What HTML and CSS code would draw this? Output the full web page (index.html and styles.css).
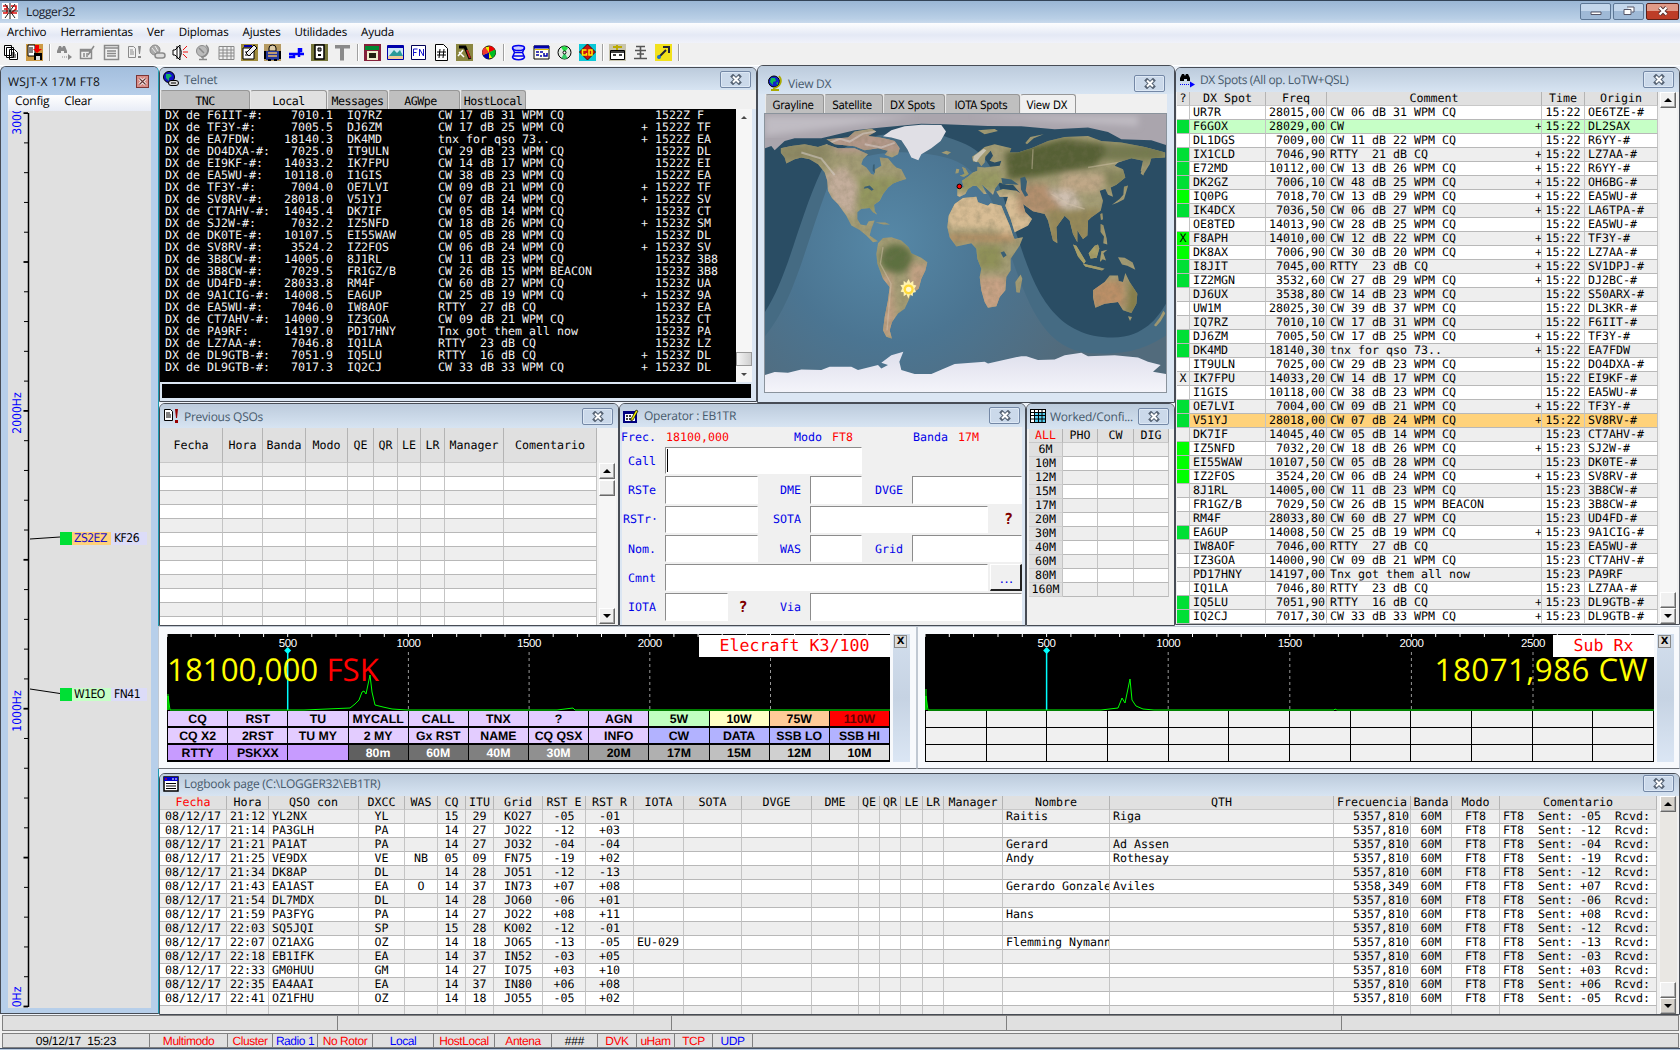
FILE: index.html
```html
<!DOCTYPE html>
<html lang="es">
<head>
<meta charset="utf-8">
<title>Logger32</title>
<link rel="stylesheet" href="styles.css">
</head>
<body>
<div class="app">
  <header class="titlebar">
    <svg class="ico" viewBox="0 0 16 16"><rect width="16" height="16" fill="#fff"/><path d="M1 3h4v3h-3h3v4h-4M9 3h5v3l-5 4h6" stroke="#d11" stroke-width="1.6" fill="none"/><path d="M8 0v16M0 8h16M3 1l10 14M13 1l-10 14" stroke="#222" fill="none"/></svg>
    <span class="app-name">Logger32</span>
    <span class="sysbuttons">
      <i><svg viewBox="0 0 12 10"><path d="M1 6h10v2.500h-10z" fill="#fff" stroke="#556"/></svg></i>
      <i><svg viewBox="0 0 12 10"><path d="M4 1h7v5h-2M1 3.500h7v5h-7z" fill="#fff" stroke="#556"/></svg></i>
      <i class="shut"><svg viewBox="0 0 12 10"><path d="M2.500 1.500l7 7M9.500 1.500l-7 7" stroke="#533" stroke-width="4"/><path d="M2.500 1.500l7 7M9.500 1.500l-7 7" stroke="#fff" stroke-width="2.200"/></svg></i>
    </span>
  </header>
  <nav class="menubar"><span>Archivo</span><span>Herramientas</span><span>Ver</span><span>Diplomas</span><span>Ajustes</span><span>Utilidades</span><span>Ayuda</span></nav>
  <div class="toolbar" id="toolbar"></div>

  <main class="mdi">
    <section class="win active w-wsjt">
      <div class="cap"><b>WSJT-X 17M FT8</b><i class="redx"><svg viewBox="0 0 9 9"><path d="M2 2l5 5M7 2l-5 5" stroke="#fff" stroke-width="2.400"/><path d="M2 2l5 5M7 2l-5 5" stroke="#633"/></svg></i></div>
      <div class="submenu"><span>Config</span><span>Clear</span></div>
      <div class="bandmap">
        <svg id="scale" viewBox="8 110 143 897"></svg>
        <div class="tag t1"><i></i><b class="am">ZS2EZ</b><em>KF26</em></div>
        <div class="tag t2"><i></i><b class="gr">W1EO</b><em>FN41</em></div>
      </div>
    </section>

    <section class="win w-telnet">
      <div class="cap"><svg class="ico" viewBox="0 0 16 16"><circle cx="6" cy="6" r="5.500" fill="#11c" stroke="#000"/><path d="M3 3h4l2 2-3 2v3l-3-3z" fill="#1a6"/><rect x="5.500" y="9.500" width="10" height="5" rx="2.500" fill="#ddd" stroke="#000"/><path d="M8 12h5" stroke="#000"/></svg><b>Telnet</b></div>
      <div class="tabs mono"><span>TNC</span><span class="on">Local</span><span>Messages</span><span>AGWpe</span><span>HostLocal</span></div>
      <div class="term"><pre id="telnet"></pre><div class="sb flat"><i class="up"></i><i class="thumb"></i><i class="down"></i></div></div>
      <div class="entry"></div>
    </section>

    <section class="win w-map">
      <div class="cap"><svg class="ico" viewBox="0 0 16 16"><circle cx="7" cy="6.500" r="5.500" fill="#12c" stroke="#000"/><path d="M4 3l4 0 1 3-3 1v3l-3-3zM9 8l2-1v3z" fill="#1b5"/><path d="M12 1c4 5 1 11-5 12M4 15h8M7 13v2" stroke="#aa0" stroke-width="1.800" fill="none"/></svg><b>View DX</b></div>
      <div class="tabs tah"><span>Grayline</span><span>Satellite</span><span>DX Spots</span><span>IOTA Spots</span><span class="on">View DX</span></div>
      <svg class="map" viewBox="31 159 1203 837" preserveAspectRatio="none">
        <defs>
          <radialGradient id="sea" gradientUnits="userSpaceOnUse" cx="400" cy="540" r="620"><stop offset="0" stop-color="#5688a7"/><stop offset=".5" stop-color="#4b7592"/><stop offset="1" stop-color="#526b7c"/></radialGradient>
          <linearGradient id="ant" x1="0" x2="0" y1="0" y2="1"><stop offset="0" stop-color="#dedfec"/><stop offset="1" stop-color="#f4f4fa"/></linearGradient>
          <filter id="soft"><feGaussianBlur stdDeviation="10"/></filter>
          <filter id="relief" x="0" y="0" width="100%" height="100%"><feTurbulence type="fractalNoise" baseFrequency=".05" numOctaves="4" seed="4"/><feColorMatrix values="0 0 0 0 .2  0 0 0 0 .18  0 0 0 0 .1  1.600 0 0 0 -.600"/></filter>
          <clipPath id="land">
            <path d="M78 262L110 255 150 250 190 258 215 250 250 262 300 262 340 280 325 295 320 310 335 320 350 340 358 342 362 325 380 315 375 290 400 292 415 310 425 320 440 325 450 345 455 355 430 362 415 368 400 380 385 400 375 420 358 432 360 450 368 462 355 455 345 442 320 444 308 455 308 475 318 492 335 495 342 482 360 480 350 505 345 525 370 542 355 545 335 525 315 508 290 495 275 465 250 430 232 412 220 390 218 360 210 335 190 310 165 295 140 290 120 295 95 308 90 290 78 275Z"/>
            <path d="M215 235L280 230 300 212 350 203 365 212 340 225 375 230 400 235 420 240 435 262 430 280 412 290 390 282 400 270 370 262 330 268 300 256 240 250Z"/>
            <path d="M370 548L385 532 410 530 440 540 462 560 470 578 500 592 518 605 512 630 500 655 492 685 470 700 462 720 450 745 430 760 412 785 405 810 412 836 395 830 385 810 390 770 400 720 405 680 385 655 368 610 365 580Z"/>
            <path d="M600 430L625 412 665 408 670 425 700 435 708 428 740 435 750 460 765 495 775 525 780 535 805 530 795 555 768 595 768 630 755 650 752 690 735 710 725 738 700 742 690 725 680 690 675 650 680 625 668 595 665 565 650 548 605 558 585 530 578 500 582 465Z"/>
            <path d="M785 696L782 665 798 642 803 655 795 697Z"/>
            <path d="M608 405L608 380 628 380 622 360 640 348 655 335 668 330 668 318 690 320 735 315 740 300 720 305 705 300 715 285 708 270 692 288 690 305 680 316 672 304 655 302 652 288 670 275 690 258 720 250 770 262 765 275 790 275 830 262 880 240 930 228 1000 225 1040 240 1100 245 1170 258 1232 275 1232 290 1190 292 1185 310 1168 338 1158 330 1165 300 1130 292 1090 305 1080 315 1105 325 1112 350 1085 372 1068 380 1075 408 1060 402 1052 385 1035 390 1045 420 1038 450 1010 470 1000 480 998 525 985 535 975 520 968 508 968 545 976 560 955 520 945 480 930 465 905 500 908 548 895 540 880 480 870 460 835 452 805 430 812 455 832 475 820 495 780 515 768 475 752 435 760 408 735 408 725 392 745 385 785 390 798 398 775 372 755 372 735 365 722 382 715 402 700 388 680 370 696 400 688 400 666 376 655 375 640 385 632 400 615 408Z"/>
            <path d="M615 345L630 340 622 318 632 322 642 340 628 348ZM602 338l3-14 9 1-3 12ZM560 276l15-6 14 4-10 8ZM670 208l50-4 10 6-40 10ZM812 246l15-18 40-8-30 12-20 18Z"/>
            <path d="M955 552l10 4 28 46-5 8-18-22ZM985 610l45 10 20 5-8 5-50-12ZM1002 578l18-22 10-4 4 12-8 28-18 2ZM1040 572l18-4-12 10 8 22-10-4-8 8ZM1090 590l20 2 24 14 8 22-24-12-16-4ZM1038 490l8 4 10 40 2 18-12-4 2-20-10-14ZM1037 460l6-2 2 18-6 2ZM1072 432l22-16 12-14 2-24 12-4-6 22-6 20-20 10Z"/>
            <path d="M1015 690L1050 665 1065 645 1090 645 1092 662 1105 665 1112 638 1125 665 1148 700 1145 730 1130 758 1105 750 1090 725 1050 730 1022 742 1015 710ZM1120 768l12 2-6 12ZM1198 795l18-24 10-20 6 8-14 24-14 16ZM1158 338l14-40 20-14-16 30-10 30Z"/>
            <path d="M362 486l30 0 14 6-20 0Z"/>
          </clipPath>
        </defs>
        <rect x="31" y="159" width="1203" height="837" fill="#2a4d64"/>
        <path fill="#456b83" d="M31 755C100 650 130 480 200 330C260 210 500 195 580 230C690 265 710 300 760 450C820 600 850 832 1075 832C1170 830 1210 770 1234 730V996H31Z"/>
        <path fill="url(#sea)" d="M31 828C120 720 150 560 218 380C270 240 520 270 590 295C690 330 730 450 770 590C830 760 880 880 1030 880C1140 885 1195 850 1234 826V996H31Z"/>
        <path fill="#aaa5ad" d="M31 159H1234V252L1190 238 1100 235 1060 213 1000 200 900 205 800 196 700 195 570 190 500 188 380 200 300 208 200 232 120 232 90 240 60 268 50 255 31 262Z"/>
        <g filter="url(#soft)"><path fill="#c0bcc3" d="M31 165h450l-200 30-250 30zM650 165h500v30z"/></g>
        <g clip-path="url(#land)">
          <rect x="31" y="159" width="1203" height="837" fill="#a39c75"/>
          <g filter="url(#soft)">
            <path fill="#c4ae9c" d="M205 345l65-30 40 60-15 95-60-40z"/><path fill="#93975f" d="M310 350h130v100h-130z"/><path fill="#b3988a" d="M210 215h240v60h-200z"/><path fill="#8c8863" d="M75 250h150v50h-150z"/>
            <ellipse cx="425" cy="595" rx="48" ry="44" fill="#5d6f40"/><path fill="#c2a184" d="M470 610h60l-20 80-50 20zM370 650l40-10 20 190h-50z"/>
            <path fill="#d8bd95" d="M570 400h200l70 60-20 60-70 10-20-25h-150z"/><path fill="#b58d63" d="M580 522h200v20h-200z"/><path fill="#8f9159" d="M660 555h80v70h-70z"/><path fill="#c9a386" d="M670 650h90v100h-90z"/>
            <path fill="#566136" d="M750 275l180-42 150 20-60 65-180 30-80 10z"/><path fill="#747a50" d="M1050 250h180v50h-180z"/><path fill="#989a64" d="M610 330h130v60h-130z"/><path fill="#b28f6e" d="M790 370h80l80 50-40 40h-120z"/><path fill="#c0a888" d="M930 340h130l-30 55h-130z"/><path fill="#cfc0b1" d="M875 385l80 5 30 50-60 5z"/><path fill="#96895a" d="M880 445h160v100h-160z"/><path fill="#85855a" d="M1040 330h80v50h-60z"/>
            <path fill="#bc9067" d="M1010 660h100v80h-100z"/><path fill="#857d4a" d="M1125 660h30v100h-40z"/><path fill="#a9a068" d="M950 550h90v80h-90z"/>
          </g>
          <rect x="31" y="159" width="1203" height="837" filter="url(#relief)" opacity=".38"/>
          <path d="M385 560l-8 50 32 60-12 140M890 400l50 30 50 15M835 265l-3 60M1000 320l120-20" fill="none" stroke="#d5c6ae" stroke-width="4" opacity=".45"/>
          <path d="M215 250l40-16 30 8 40-24 40-6M330 250l50 10 40-14M140 275l60 18 40 50" fill="none" stroke="#d9d2cf" stroke-width="6" opacity=".5"/>
        </g>
        <path fill="#3a5f74" d="M330 378l15-4 12 12-6 4-12-8-12 2ZM797 352l14-4 6 14-4 28 8 14-10 4-12-22ZM740 352l30 4 22 16-30-2-18 2ZM738 576l10-4 8 12-10 8ZM355 312l5-2 0 28-6-10Z"/>
        <path fill="#e0dfe5" d="M385 226L410 208 450 196 500 191 560 192 574 212 558 240 530 262 500 280 491 298 470 290 458 265 440 238 410 230Z"/>
        <path fill="#d8d4cf" d="M655 298l2-12 30-22 8 4-20 22-10 14z" opacity=".7"/>
        <path fill="url(#ant)" d="M31 945L60 936 100 938 140 928 200 930 225 920 290 920 310 930 370 915 380 925 400 915 380 908 410 885 446 875 434 905 440 930 480 942 530 942 600 912 690 905 700 910 800 888 815 888 850 900 900 898 930 885 980 878 1000 888 1080 885 1150 892 1180 905 1218 915 1195 935 1234 942V996H31Z"/>
        <path d="M462 656l5 12 9-7 0 12 9 2-6 10 5 10-9 2-1 11-8-6-5 13-5-13-9 6 0-12-9-2 5-10-6-10 10-1 0-12 8 7z" fill="#fff3b0"/><circle cx="462" cy="687" r="15" fill="#ffd93a"/><circle cx="462" cy="687" r="8" fill="#fff8d0"/>
        <circle cx="614" cy="377" r="7" fill="#f00" stroke="#000" stroke-width="3"/>
      </svg>
    </section>

    <section class="win w-spots">
      <div class="cap"><svg class="ico" viewBox="0 0 16 16"><path d="M1 6l2-4h2l1 2 1-2h2l2 4v3h-3v-2h-3v2h-4z" fill="#000"/><path d="M1 12.500h10" stroke="#00f" stroke-dasharray="1 1"/><path d="M11 9.500l5 3-5 3z" fill="#00f"/></svg><b>DX Spots (All op. LoTW+QSL)</b></div>
      <div class="gridrow"><table id="spots"></table><div class="sb"><i class="up"></i><i class="thumb"></i><i class="down"></i></div></div>
    </section>

    <section class="win w-prev">
      <div class="cap"><svg class="ico" viewBox="0 0 16 16"><path d="M1.500 1.500h6l2 2v9h-8z" fill="#fff" stroke="#000"/><path d="M3 5h4M3 7h5M3 9h5" stroke="#000"/><path d="M12 1h3l-1 9h-1zM12 12h3v3h-3z" fill="#900"/></svg><b>Previous QSOs</b></div>
      <div class="gridrow"><table id="prev"></table><div class="sb"><i class="up"></i><i class="thumb"></i><i class="down"></i></div></div>
    </section>

    <section class="win w-oper">
      <div class="cap"><svg class="ico" viewBox="0 0 16 16"><rect x="1" y="4" width="12" height="10" fill="#fff" stroke="#000080" stroke-width="2"/><path d="M0 3h12v3h-12z" fill="#000080"/><path d="M3 8h2M6 8h2M3 11h2M6 11h2" stroke="#000" stroke-width="1.500"/><path d="M8 11l5-9 2 1-5 9-2 1z" fill="#ee0" stroke="#000" stroke-width=".700"/></svg><b>Operator : EB1TR</b></div>
      <div class="form">
        <div class="fr head"><label>Frec.</label><u class="f1">18100,000</u><label>Modo</label><u class="f2">FT8</u><label>Banda</label><u>17M</u></div>
        <div class="fr"><label>Call</label><span class="in caret"></span></div>
        <div class="fr"><label>RSTe</label><span class="in"></span><label>DME</label><span class="in"></span><label>DVGE</label><span class="in"></span></div>
        <div class="fr sota"><label>RSTr·</label><span class="in"></span><label>SOTA</label><span class="in"></span><strong>?</strong></div>
        <div class="fr"><label>Nom.</label><span class="in"></span><label>WAS</label><span class="in"></span><label>Grid</label><span class="in"></span></div>
        <div class="fr cmnt"><label>Cmnt</label><span class="in"></span><button>...</button></div>
        <div class="fr iota"><label>IOTA</label><span class="in"></span><strong>?</strong><label>Via</label><span class="in"></span></div>
      </div>
    </section>

    <section class="win w-worked">
      <div class="cap"><svg class="ico" viewBox="0 0 16 16"><rect x=".500" y="1.500" width="15" height="13" fill="#fff" stroke="#000"/><path d="M5 5h10v9h-10z" fill="#5ce"/><path d="M1 4.500h14M1 7.500h14M1 11h14M4.500 2v12M8.500 2v12M12 2v12" stroke="#000"/></svg><b>Worked/Confi...</b></div>
      <table id="worked"></table>
    </section>

    <section class="radio r1">
      <div class="scope"><svg id="scope1"></svg><div class="vfo">18100,000 <span>FSK</span></div><div class="rig">Elecraft K3/100</div></div>
      <div class="side"><i>X</i></div>
      <div class="keys" id="keys1"></div>
    </section>
    <section class="radio r2">
      <div class="scope"><svg id="scope2"></svg><div class="vfo">18071,986 CW</div><div class="rig">Sub Rx</div></div>
      <div class="side"><i>X</i></div>
      <div class="keys" id="keys2"></div>
    </section>

    <section class="win w-log">
      <div class="cap"><svg class="ico" viewBox="0 0 16 16"><rect x="1" y="1" width="14" height="14" fill="#fff" stroke="#000" stroke-width="1.500"/><path d="M1 1h14v4h-14z" fill="#00c"/><path d="M2 3h2" stroke="#f00"/><path d="M9 3h2M12 3h2" stroke="#fff"/><path d="M3 7.500h10M3 10h10M3 12.500h10" stroke="#000"/></svg><b>Logbook page (C:\LOGGER32\EB1TR)</b></div>
      <div class="gridrow"><table id="log"></table><div class="sb"><i class="up"></i><i class="thumb"></i><i class="down"></i></div></div>
    </section>
  </main>
  <div class="status s1"><span></span><span></span><span></span><span></span><span></span></div>
  <div class="status s2"><span class="k">09/12/17&nbsp; 15:23</span><span>Multimodo</span><span>Cluster</span><span class="b">Radio 1</span><span>No Rotor</span><span class="b">Local</span><span>HostLocal</span><span>Antena</span><span class="k">###</span><span>DVK</span><span>uHam</span><span>TCP</span><span class="b">UDP</span><span></span></div>
  <div class="task"></div>
</div>
<script src="app.js"></script>
</body>
</html>
```
FILE: styles.css
```css
* { box-sizing: border-box; }
body { margin: 0; background: #f0f0f0; overflow: hidden; }
.app { width: 1680px; height: 1050px; display: flex; flex-direction: column; font: 12px "Open Sans", sans-serif; text-rendering: geometricPrecision; color: #000; }
i, em, u { font-style: normal; text-decoration: none; }
svg { display: block; }
.ico { width: 16px; height: 16px; flex: none; }

.titlebar { height: 23px; flex: none; border-top: 1px solid #334357; background: linear-gradient(#9ab6d5, #b9cfe6 80%, #c9daec); display: flex; align-items: center; padding: 0 1px 2px 2px; }
.titlebar .app-name { margin-left: 8px; font-size: 12px; letter-spacing: -.35px; color: #15202c; }
.sysbuttons { margin-left: auto; display: flex; gap: 2px; }
.sysbuttons i { width: 31px; height: 17px; border: 1px solid #5c7694; border-radius: 2px; background: linear-gradient(#c3d6eb 50%, #9fb9d6 50%); display: flex; align-items: center; justify-content: center; }
.sysbuttons svg { width: 12px; height: 10px; fill: none; }
.sysbuttons .shut { width: 33px; background: linear-gradient(#e09a88 50%, #bd3d27 50%); border-color: #5a2018; }

.menubar { height: 20px; flex: none; background: linear-gradient(#fdfdfe, #e4e9f5 60%, #f0f2fa); display: flex; align-items: center; padding: 0 7px 1px; gap: 14px; font-size: 11.600px; letter-spacing: -.15px; }
.toolbar { height: 23px; flex: none; background: #f0f0f0; border-bottom: 1px solid #fff; display: flex; align-items: center; padding: 0 0 3px 2px; }
.toolbar svg { width: 17px; height: 17px; margin: 0 3.070px; flex: none; fill: none; }
.toolbar svg:first-child { margin-left: 1px; }
.toolbar hr { width: 1px; height: 17px; margin: 0 3px; border: 0; background: #a0a0a0; box-shadow: 1px 0 #fff; flex: none; }

.mdi { position: relative; flex: 1; background: #eef3fa; }
.win { position: absolute; background: #dbe6f3; border: 1px solid #474c55; border-radius: 6px 6px 0 0; overflow: hidden; display: flex; flex-direction: column; }
.cap { flex: none; height: 23px; background: linear-gradient(#bccbdc, #d7e4f2); display: flex; align-items: center; padding: 0 5px 0 3px; }
.cap b { font-weight: 400; margin-left: 5px; color: #475a6c; letter-spacing: -.25px; white-space: nowrap; flex: 1; }
.cap .x { width: 31px; height: 17px; border: 1px solid #7488a6; border-radius: 2px; background: #cbd9ea; display: flex; align-items: center; justify-content: center; box-shadow: inset 0 0 0 1px #dde8f5; flex: none; }
.cap .x svg { width: 12px; height: 11px; }

/* scrollbars */
.sb { width: 17px; flex: none; display: flex; flex-direction: column; background: #f6f6f6; margin-left: auto; }
.sb i { width: 16px; height: 16px; flex: none; background: #f0f0f0; border: 1px solid; border-color: #fff #696969 #696969 #fff; box-shadow: inset -1px -1px #a8a8a8; }
.sb .thumb { margin-top: auto; }
.sb i.up::after, .sb i.down::after { content: ""; display: block; margin: 5px auto 0 3px; width: 0; border: 4px solid transparent; border-top: 0; border-bottom-color: #000; }
.sb i.down::after { border: 4px solid transparent; border-bottom: 0; border-top-color: #000; }

/* data grids */
table { table-layout: fixed; border-spacing: 0; font: 11.630px/13px "DejaVu Sans Mono", monospace; flex: none; width: 0; background: #fff; }
th { font-weight: 400; background: #e0e0e0; border-right: 1px solid #b4b4b4; border-bottom: 1px solid #c8c8c8; padding: 0; height: 14px; overflow: hidden; white-space: nowrap; }
td { height: 14px; padding: 0 0 0 3px; border-right: 1px solid #c4c4c4; border-bottom: 1px solid #b8b8b8; overflow: hidden; white-space: pre; }
tr.alt td { background: #eee; }
td.c { text-align: center; padding: 0; }
td.r { text-align: right; padding: 0 1px 0 0; }
.plus { margin-left: 2px; }
.gridrow { display: flex; flex: 1; min-height: 0; background: #f0f0f0; }

.w-wsjt { left: 0; top: 0; width: 159px; height: 948px; background: #b7cfea; border-right-color: #1c9bb0; }
.w-wsjt .cap { height: 28px; background: linear-gradient(#a3bedd, #b7cfea); padding: 0 9px 0 7px; }
.w-wsjt .cap b { margin: 0; color: #111; font-size: 12px; letter-spacing: .25px; }
.redx { width: 13px; height: 13px; background: #d98c86; border: 1px solid #7b3535; }
.redx svg { width: 11px; height: 11px; }
.submenu { height: 16px; margin: 0 7px; background: linear-gradient(#fff, #e8ecf6); display: flex; gap: 15px; padding: 0 0 4px 7px; align-items: center; font-size: 12px; letter-spacing: -.25px; flex: none; line-height: 12px; }
.bandmap { flex: none; height: 897px; margin: 0 7px; position: relative; background: #e0e0e0; }
.bandmap svg { width: 143px; height: 897px; overflow: hidden; font: 12px "DejaVu Sans Condensed", "DejaVu Sans", sans-serif; }
.tag { position: absolute; left: 52px; display: flex; height: 13px; font: 12px/13px "DejaVu Sans Condensed", "DejaVu Sans", sans-serif; letter-spacing: -.5px; }
.tag i { width: 12px; background: #00df35; }
.tag b { width: 39px; padding-left: 2px; font-weight: 400; }
.tag em { width: 36px; padding-left: 3px; background: #dcdcf8; }
.tag .am { background: #ffd27a; color: #1c10c8; }
.tag .gr { background: #c6ffc6; }
.t1 { top: 421px; }
.t2 { top: 577px; }

.tabs { display: flex; flex: none; height: 19px; background: #f0f0f0; }
.tabs span { background: #bfbfbf; border: 1px solid #979797; border-left-color: #e8e8e8; border-bottom: 0; border-radius: 3px 3px 0 0; display: flex; align-items: center; justify-content: center; padding-top: 2px; }
.tabs .on { background: #e0e0e0; }
.mono { font: 11.630px "DejaVu Sans Mono", monospace; letter-spacing: -.5px; }
.tah { font: 11.500px "DejaVu Sans Condensed", "DejaVu Sans", sans-serif; letter-spacing: -.3px; }

.w-telnet { left: 159px; top: 1px; width: 598px; height: 335px; }
.w-telnet .cap { height: 22px; }
.w-telnet .tabs span:nth-child(1) { width: 90px; }
.w-telnet .tabs span:nth-child(2) { width: 77px; }
.w-telnet .tabs span:nth-child(3) { width: 61px; }
.w-telnet .tabs span:nth-child(4) { width: 72px; padding-right: 7px; }
.w-telnet .tabs span:nth-child(5) { width: 66px; }
.term { display: flex; height: 273px; background: #000; margin-right: 4px; flex: none; }
.term pre { margin: 0; padding: 0 0 0 5px; width: 577px; font: 11.630px/12px "DejaVu Sans Mono", monospace; color: #f2f2f2; }
.flat { width: 16px; }
.flat i { border: 0; box-shadow: none; background: none; }
.flat .thumb { height: 14px; border: 1px solid #999; background: linear-gradient(90deg, #f4f4f4, #cfcfcf); }
.flat i.up::after, .flat i.down::after { border-width: 3px; margin-top: 7px; margin-left: 5px; opacity: .7; }
.flat i.up::after { border-top-width: 0; }
.flat i.down::after { border-bottom-width: 0; }
.entry { height: 14px; background: #000; margin: 2px 5px 0 2px; }

.w-map { left: 757px; top: -1px; width: 418px; height: 338px; }
.w-map .cap { height: 28px; padding: 6px 9px 0 9px; }
.w-map .tabs { margin: 0 7px; }
.w-map .tabs .on { background: #f0f0f0; }
.w-map .tabs span:nth-child(1), .w-map .tabs span:nth-child(2) { width: 59px; padding-right: 3px; }
.w-map .tabs span:nth-child(3) { width: 62px; padding-right: 3px; }
.w-map .tabs span:nth-child(4) { width: 75px; padding-right: 3px; }
.w-map .tabs span:nth-child(5) { width: 56px; padding-right: 2px; }
.map { width: 403px; height: 280px; margin-left: 6px; border: 1px solid #8a939c; flex: none; }

.w-spots { left: 1175px; top: 1px; width: 505px; height: 558px; }
.w-spots .cap { height: 24px; padding-bottom: 1px; }
.w-spots .cap b { letter-spacing: -.35px; }
.w-spots tr.green td { background: #c6ffc6; }
.w-spots tr.amber td { background: #ffd27a; }
.w-spots tr td.g1 { background: #00df35; }
.w-spots tr td.g2 { background: #0f0; }
.w-spots table { margin-left: 1px; }
.w-spots .sb { margin-right: 2px; }

.w-prev { left: 159px; top: 337px; width: 460px; height: 223px; }
.w-prev .cap { height: 24px; }
.w-prev th { height: 35px; }
.w-prev .sb { margin: 35px 2px 1px auto; }
.w-prev .thumb { margin-top: 1px; }
.w-prev .down { margin-top: auto; }

.w-oper { left: 619px; top: 337px; width: 407px; height: 223px; }
.form { background: #f0f0f0; margin: 0 3px 0 2px; padding-left: 1px; flex: 1; font: 11.630px "DejaVu Sans Mono", monospace; color: #0000e8; display: flex; flex-direction: column; gap: 2px; }
.fr { height: 27.300px; display: grid; grid-template-columns: 35px 93px 38px 52px 36px 1fr; column-gap: 7px; align-items: stretch; }
.fr label { text-align: right; align-self: center; white-space: nowrap; padding-right: 2px; direction: rtl; unicode-bidi: plaintext; }
.fr u { color: #f00; align-self: center; white-space: nowrap; }
.fr.head { display: flex; height: 19px; gap: 10px; margin-bottom: -1px; }
.fr.head label { padding: 0; margin-left: -2px; }
.fr .f1 { width: 120px; }
.fr .f2 { width: 73px; }
.in { background: #fff; border: 1px solid #8c8c8c; border-right-color: #fff; border-bottom-color: #fff; }
.caret { grid-column: 2 / 5; }
.caret::before { content: ""; display: block; width: 1px; height: 23px; margin: 1px; background: #000; }
.fr strong { color: #800000; font: bold 15px "DejaVu Sans Mono", monospace; align-self: center; text-align: center; }
.sota { grid-template-columns: 35px 93px 38px 178px 1fr; }
.cmnt { grid-template-columns: 35px 323px 1fr; }
.cmnt button { margin-left: -5px; background: #f0f0f0; border: 1px solid #fff; border-right: 2px solid #222; border-bottom: 2px solid #222; color: #0000e8; font: 11px "DejaVu Sans Mono", monospace; letter-spacing: -2px; padding: 5px 0 0; }
.iota { grid-template-columns: 35px 63px 16px 45px 1fr; }

.w-worked { left: 1026px; top: 337px; width: 149px; height: 223px; background: #f0f0f0; }
.w-worked .cap { height: 25px; padding-bottom: 1px; }
.w-worked .cap b { letter-spacing: -.25px; margin-left: 4px; }
.w-worked table { margin-left: 2px; }
.w-worked th:first-child { color: #f00; }
.w-worked td:first-child { background: #e0e0e0; border-bottom-color: #d0d0d0; }

.radio { position: absolute; top: 560px; height: 143px; background: #f7f9fc; border: 1px solid #c0c8d2; border-bottom-color: #6d7178; display: grid; grid-template-rows: 77px 51px; padding: 7px 7px 0 8px; column-gap: 3px; }
.r1 { left: 158px; width: 759px; grid-template-columns: 723px 17px; }
.r2 { left: 917px; width: 763px; grid-template-columns: 729px 17px; padding-left: 7px; }
.scope { background: #000; position: relative; }
.scope svg { width: 100%; height: 77px; font: 11.500px "Liberation Sans", sans-serif; letter-spacing: -.4px; }
.vfo { position: absolute; top: 21px; left: 0; font-size: 31.300px; line-height: 31px; color: #ff0; white-space: nowrap; letter-spacing: 0; }
.vfo span { color: #f00; }
.rig { position: absolute; right: 0; top: 1px; width: 191px; height: 22px; background: #fff; color: #f00; font: 16.600px/21px "DejaVu Sans Mono", monospace; text-align: center; }
.r2 .rig { width: 101px; }
.r2 .vfo { left: auto; right: 6px; letter-spacing: .45px; }
.side { grid-row: 1 / 3; grid-column: 2; background: linear-gradient(#d2deed, #c6d3e3 50%, #dbe6f4); padding: 1px; }
.side i { display: block; width: 13px; height: 13px; border: 1px solid #888; background: #dcdcdc; font: bold 10px/11px "DejaVu Sans", sans-serif; text-align: center; }
.keys { grid-column: 1; grid-row: 2; display: grid; grid-template-columns: repeat(12, 1fr); grid-template-rows: repeat(3, 17px); background: #f0f0f0; border-left: 1px solid #000; }
.keys span { border-right: 1px solid #000; border-bottom: 2px solid #000; font: bold 12.300px/17px "Liberation Sans", sans-serif; text-align: center; white-space: nowrap; overflow: hidden; }
.r2 .keys span { border-bottom-width: 1px; }
.lil { background: #e3ccff; } .pur { background: #c79bff; } .lav { background: #b2b2ff; }

.w-log { left: 159px; top: 707px; width: 1521px; height: 242px; }
.w-log .cap { height: 22px; padding-bottom: 3px; }
.w-log .cap b { letter-spacing: -.25px; }
.w-log th:first-child { color: #f00; }
.w-log .sb { margin-right: 2px; background: #e9e7e3; }
.w-log .sb .up, .w-log .sb .down { background: #d6d2cb; }

.status { flex: none; display: flex; background: #e0e0e0; border: 1px solid #808080; margin: 0 1px 0 2px; }
.status span { border-right: 1px solid #808080; text-align: center; white-space: nowrap; }
.s1 { height: 16px; margin-bottom: 2px; }
.s1 span { width: 334.700px; }
.s1 span:last-child, .s2 span:last-child { flex: 1; border: 0; }
.s2 { height: 15px; font: 12px/15px "Liberation Sans", sans-serif; letter-spacing: -.45px; color: #f00; }
.s2 .k { color: #000; letter-spacing: -.2px; } .s2 .b { color: #00f; }
.task { height: 2px; flex: none; background: #b9cbe0; border-top: 1px solid #44536a; }
```
FILE: app.js
```js
const $ = id => document.getElementById(id);

// Close button on every document window except the docked band map
document.querySelectorAll('.win:not(.active) .cap').forEach(c => {
  c.insertAdjacentHTML('beforeend', '<i class="x"><svg viewBox="0 0 12 11"><path d="M3 2.5l6 6M9 2.5l-6 6" stroke="#566374" stroke-width="4" stroke-linecap="square"/><path d="M3 2.5l6 6M9 2.5l-6 6" stroke="#fff" stroke-width="2"/></svg></i>');
});

// Toolbar: '|' is a separator
const G = '#8a8a8a';
const icons = [
  '<path d="M1.500 1.500h7v10h-7z M3.500 3.500h7v10h-7z M6.500 5.500h5l3 3v7h-8z" fill="#fff" stroke="#000"/><path d="M8 9h4M8 11h5M8 13h5" stroke="#000"/>',
  '<path d="M0 0h17v17h-17z" fill="#cc9a45"/><path d="M2 1h7v11h-7z" fill="#fff" stroke="#000"/><path d="M3 4h4M3 6h4M3 8h4" stroke="#000"/><path d="M9 1h4v4h3l-5 4-4-4h2z" fill="#e00"/><path d="M8 9h8v7h-8z" fill="#000"/><path d="M10 12h4v4h-4z" fill="#ddd"/>',
  '|',
  `<path d="M1 7l2-5h2l1 2 1-2h2l2 5v2h-3v-2h-3v2h-4z" fill="${G}"/><path d="M6 13h6" stroke="${G}" stroke-dasharray="1 1"/><path d="M12 10l4 3-4 3z" fill="${G}"/>`,
  `<path d="M1.500 5.500h11v9h-11zM1 7h11M4 10h2M7 10h2M4 12h2M7 12h2M9 11l6-9" stroke="${G}" stroke-width="1.500"/>`,
  `<path d="M1.500 1.500h14v14h-14zM1 4h14M4 7h9M4 9.500h9M4 12h9" stroke="${G}" stroke-width="1.500"/>`,
  `<path d="M2.500 2.500h5l2 2v9h-7zM4 6h3M4 8h4M4 10h4" stroke="${G}"/><path d="M12 2h3l-1 8h-1zM12 12h3v2h-3z" fill="${G}"/>`,
  `<circle cx="6" cy="6" r="5" fill="#aaa" stroke="${G}"/><path d="M3 4l4 5M6 2l3 5" stroke="#eee"/><rect x="6" y="9" width="10" height="5" rx="2.500" fill="#ddd" stroke="${G}" stroke-width="1.500"/>`,
  '<path d="M1 6h2l5-5v15l-5-5h-2zM5 2v13" fill="#fff" stroke="#000"/><path d="M7 3c3 3 3 8 0 11" stroke="#000"/><path d="M11 8h5M11 6l4-4M11 10l4 4" stroke="#e11"/>',
  `<circle cx="7" cy="7" r="5.500" fill="#bbb" stroke="${G}"/><path d="M4 4l5 5M11 1c5 5 1 12-5 12M4 15.500h8M8 13v2" stroke="${G}" stroke-width="1.500"/>`,
  `<path d="M1 2.500h15v13h-15zM1 6h15M1 9h15M1 12h15M5 2v13M9 2v13M13 2v13" stroke="${G}"/>`,
  '<path d="M0 0h17v17h-17z" fill="#a08c3c"/><path d="M2 4h11v11h-11z" fill="#fff" stroke="#000"/><path d="M4 8h4M4 11h6" stroke="#000"/><path d="M5 9l8-8 3 3-8 8z" fill="#eee" stroke="#000"/><path d="M3 2l8 0" stroke="#00a" stroke-width="2"/>',
  '<path d="M0 0h17v17h-17z" fill="#b59a62"/><path d="M5 4a3.500 3 0 0 1 7 0v3h-7z" fill="#dca" stroke="#000"/><path d="M2 7h13v9h-13z" fill="#24389a"/><path d="M4 9h9M4 12h9" stroke="#eb6" stroke-width="1.500"/><path d="M1 7v8M16 7v8M4 16h3M10 16h3" stroke="#000" stroke-width="2"/>',
  '<path d="M5 10h11M11 4v9M13 4v3h-3M1 10h5v3h-5" stroke="#00f" stroke-width="2.500"/>',
  '<path d="M0 0h17v17h-17z" fill="#77773c"/><path d="M4 1h9v14h-9z" fill="#fff" stroke="#000" stroke-width="1.500"/><path d="M7 4h3v3h-3z" fill="#888" stroke="#000"/><path d="M7 11h3" stroke="#000" stroke-width="2"/>',
  `<path d="M1 1h15v3.500h-6v12h-4v-12h-5z" fill="${G}"/>`,
  '|',
  '<path d="M0 0h17v17h-17z" fill="#84203a"/><path d="M1 2h14v4h-14z" fill="#083"/><path d="M3 7h11v9h-11z" fill="#eec"/><path d="M5 9h7v5h-7z" fill="#221"/>',
  '<path d="M.500 1.500h16v14h-16z" fill="#cfe8f5" stroke="#00a"/><path d="M1 3h15" stroke="#00a" stroke-width="2"/><path d="M2 12l5-6 3 3 3-3 3 6z" fill="#2a9a9a"/><path d="M1 12h15v3h-15z" fill="#ec9"/>',
  '<path d="M1.500 1.500h14v14h-14z" fill="#fff" stroke="#005"/><path d="M3.500 12v-7h4M3.500 8.500h3M9.500 12v-7l4 7v-7" stroke="#11c"/>',
  '<path d="M2.500.500h8l4 4v12h-12z" fill="#fff" stroke="#000"/><path d="M7 5l-1 9M11 5l-1 9M4 8h9M4 11h9" stroke="#000"/>',
  '<path d="M0 0h17v17h-17z" fill="#8a8640"/><path d="M3 3h6l5 12" stroke="#000" stroke-width="3"/><path d="M2 12l5-6M8 13l-5-5" stroke="#fff" stroke-width="1.500"/><path d="M11 6l3 8" stroke="#b22" stroke-width="2"/>',
  '<circle cx="9" cy="8.500" r="6.500" fill="#ee0" stroke="#000"/><path d="M9 8.500V2a6.500 6.500 0 0 1 6 4z" fill="#e00"/><path d="M9 8.500l6-3a6.500 6.500 0 0 1-3 8.500z" fill="#0b2"/><path d="M9 8.500V15a6.500 6.500 0 0 1-6-4z" fill="#00a"/><path d="M9 8.500l-6 2.500a6 6 0 0 1 2-8z" fill="#e33"/>',
  '|',
  '<ellipse cx="8.500" cy="4" rx="6" ry="2.500" fill="#ccf" stroke="#00e" stroke-width="1.500"/><path d="M2.500 4l2 4.500-2 4.500c1 3.500 11 3.500 12 0l-2-4.500 2-4.500M4 8.500h9M3 12h11" stroke="#00e" stroke-width="1.500"/>',
  '<path d="M1 2h15v13h-15z" fill="#ffe" stroke="#000"/><path d="M1 3h15" stroke="#00a" stroke-width="3"/><path d="M2 5.500h14" stroke="#db0"/><path d="M3 8h3M7 8h3M3 11h3M7 12h2M11 9v3h3v-3" stroke="#00a" stroke-width="1.500"/>',
  '<circle cx="8.500" cy="8.500" r="6.500" fill="#dfe8df" stroke="#000"/><path d="M8.500 8.500L5 3a6.500 6.500 0 0 1 7 1z" fill="#2d4"/><path d="M8.500 8.500l3 5.500a6 6 0 0 1-6 0z" fill="#3c6"/><circle cx="8.500" cy="8.500" r="1.500" fill="#fff" stroke="#000"/>',
  '<path d="M0 0h17v17h-17z" fill="#0ac8d8"/><path d="M8.500 0l8 8-8 8-8-8z" fill="#c11" stroke="#410"/><path d="M7.500 6h-4v5h4v-2M10 6h3v5h-3z" stroke="#fe0" stroke-width="1.500"/>',
  '|',
  '<path d="M0 0h17v17h-17z" fill="#c8c4ac"/><path d="M8 1v5M4 3h9" stroke="#ba0" stroke-width="2"/><path d="M1.500 6.500h14v9h-14z" fill="#fff" stroke="#000"/><path d="M2 8h13M4 11h3M10 11h3" stroke="#000" stroke-width="1.500"/>',
  '<path d="M4 2.500h9M8.500 2v12M3 6.500h11M5 10h7M2 14.500h13" stroke="#555" stroke-width="1.600"/>',
  '<path d="M0 0h17v17h-17z" fill="#f2e11c"/><path d="M3 14l8-8M8 3h6v6" stroke="#223" stroke-width="2"/><circle cx="4" cy="13" r="2" fill="#27c"/>',
  '|'
];
$('toolbar').innerHTML = icons.map(p => p === '|' ? '<hr>' : `<svg viewBox="0 0 17 17">${p}</svg>`).join('');

// Audio frequency ruler of the band map
let s = '<path d="M28.500 112V1006" stroke="#000" stroke-width="1.500"/>';
for (let i = 0; i <= 30; i++) {
  const y = 1005.500 - i * 29.780;
  s += `<path d="M${i % 5 ? 24 : 23.500} ${y}H28" stroke="#000" stroke-width="${i % 5 ? 1 : 1.800}"/>`;
}
[['3000Hz', 113], ['2000Hz', 412], ['1000Hz', 710], ['0Hz', 996]].forEach(([t, y]) => {
  s += `<text transform="translate(21 ${y}) rotate(-90)" text-anchor="middle" fill="#00f">${t}</text>`;
});
s += '<path d="M30 538L60 536M30 688l30 4.500" stroke="#000" fill="none"/>';
$('scale').innerHTML = s;

// spotter | kHz | call | comment | + | time | prefix
const spotsIn = `F6IIT-#|7010.1|IQ7RZ|CW 17 dB 31 WPM CQ||22|F
TF3Y-#|7005.5|DJ6ZM|CW 17 dB 25 WPM CQ|+|22|TF
EA7FDW|18140.3|DK4MD|tnx for qso 73..|+|22|EA
DO4DXA-#|7025.0|IT9ULN|CW 29 dB 23 WPM CQ||22|DL
EI9KF-#|14033.2|IK7FPU|CW 14 dB 17 WPM CQ||22|EI
EA5WU-#|10118.0|I1GIS|CW 38 dB 23 WPM CQ||22|EA
TF3Y-#|7004.0|OE7LVI|CW 09 dB 21 WPM CQ|+|22|TF
SV8RV-#|28018.0|V51YJ|CW 07 dB 24 WPM CQ|+|22|SV
CT7AHV-#|14045.4|DK7IF|CW 05 dB 14 WPM CQ||23|CT
SJ2W-#|7032.2|IZ5NFD|CW 18 dB 26 WPM CQ|+|23|SM
DK0TE-#|10107.5|EI55WAW|CW 05 dB 28 WPM CQ||23|DL
SV8RV-#|3524.2|IZ2FOS|CW 06 dB 24 WPM CQ|+|23|SV
3B8CW-#|14005.0|8J1RL|CW 11 dB 23 WPM CQ||23|3B8
3B8CW-#|7029.5|FR1GZ/B|CW 26 dB 15 WPM BEACON||23|3B8
UD4FD-#|28033.8|RM4F|CW 60 dB 27 WPM CQ||23|UA
9A1CIG-#|14008.5|EA6UP|CW 25 dB 19 WPM CQ|+|23|9A
EA5WU-#|7046.0|IW8AOF|RTTY  27 dB CQ||23|EA
CT7AHV-#|14000.9|IZ3GOA|CW 09 dB 21 WPM CQ||23|CT
PA9RF|14197.0|PD17HNY|Tnx got them all now||23|PA
LZ7AA-#|7046.8|IQ1LA|RTTY  23 dB CQ||23|LZ
DL9GTB-#|7051.9|IQ5LU|RTTY  16 dB CQ|+|23|DL
DL9GTB-#|7017.3|IQ2CJ|CW 33 dB 33 WPM CQ|+|23|DL`.split('\n').map(l => l.split('|'));

$('telnet').textContent = spotsIn.map(r => {
  const from = 'DX de ' + r[0] + ':';
  return from + r[1].padStart(24 - from.length) + '  ' + r[2].padEnd(13) + r[3].padEnd(29) + (r[4] || ' ') + ' 15' + r[5] + 'Z ' + r[6];
}).join('\n');

function grid(id, cols, rows) {
  const total = cols.reduce((a, c) => a + c[1], 0);
  $(id).style.width = total + 'px';
  $(id).innerHTML = '<colgroup>' + cols.map(c => `<col style="width:${c[1]}px">`).join('') + '</colgroup><tr>' +
    cols.map(c => `<th>${c[0]}</th>`).join('') + '</tr>' +
    rows.map(r => `<tr class="${r.cls}">` + cols.map((c, i) => `<td class="${c[2] || ''} ${i ? '' : r.mark || ''}">${r.cells[i] || ''}</td>`).join('') + '</tr>').join('');
}

// DX spots
const older = `|28015,00|UR7R|CW 06 dB 31 WPM CQ||OE6TZE-#
g1|28029,00|F6GOX|CW|+|DL2SAX
|7009,00|DL1DGS|CW 11 dB 22 WPM CQ||R6YY-#
g1|7046,90|IX1CLD|RTTY  21 dB CQ|+|LZ7AA-#
g1|10112,00|E72MD|CW 13 dB 26 WPM CQ|+|R6YY-#
g1|7006,10|DK2GZ|CW 48 dB 25 WPM CQ|+|OH6BG-#
g2|7018,70|IQ0PG|CW 13 dB 29 WPM CQ|+|EA5WU-#
g1|7036,50|IK4DCX|CW 06 dB 27 WPM CQ|+|LA6TPA-#
|14013,90|OE8TED|CW 28 dB 25 WPM CQ||EA5WU-#
g2|14010,00|F8APH|CW 12 dB 22 WPM CQ|+|TF3Y-#
g2|7006,90|DK8AX|CW 30 dB 20 WPM CQ|+|LZ7AA-#
g1|7045,00|I8JIT|RTTY  23 dB CQ|+|SV1DPJ-#
g1|3532,60|IZ2MGN|CW 27 dB 29 WPM CQ|+|DJ2BC-#
|3538,80|DJ6UX|CW 14 dB 23 WPM CQ||S50ARX-#
|28025,30|UW1M|CW 39 dB 37 WPM CQ||DL3KR-#`.split('\n').map(l => l.split('|'));
const marks = { DJ6ZM: 'g1', DK4MD: 'g1', OE7LVI: 'g1', V51YJ: 'g1', IZ5NFD: 'g2', EI55WAW: 'g2', IZ2FOS: 'g2', EA6UP: 'g1', IQ5LU: 'g1', IQ2CJ: 'g1' };
const all = older.map(o => ({ mark: o[0], call: o[2], f: o[1], c: o[3], p: o[4], t: '15:22', o: o[5] }))
  .concat(spotsIn.map(r => ({ mark: marks[r[2]] || '', call: r[2], f: r[1].replace('.', ',') + '0', c: r[3], p: r[4], t: '15:' + r[5], o: r[0] })));
grid('spots', [['?', 13, 'c'], ['DX Spot', 76], ['Freq', 61, 'r'], ['Comment', 215], ['Time', 43, 'c'], ['Origin', 73]],
  all.map((d, i) => ({
    mark: d.mark,
    cls: d.call === 'F6GOX' ? 'green' : d.call === 'V51YJ' ? 'amber' : i % 2 ? 'alt' : '',
    cells: [/F8APH|IK7FPU/.test(d.call) ? 'X' : '', d.call, d.f, d.p ? d.c.padEnd(29) + '<span class="plus">+</span>' : d.c, d.t, d.o]
  })));

// Previous QSOs: empty grid
grid('prev', [['Fecha', 63], ['Hora', 40], ['Banda', 43], ['Modo', 42], ['QE', 26], ['QR', 24], ['LE', 23], ['LR', 24], ['Manager', 59], ['Comentario', 93]],
  Array.from({ length: 12 }, (_, i) => ({ cls: i % 2 ? '' : 'alt', cells: [] })));

// Worked/Confirmed
grid('worked', [['ALL', 34, 'c'], ['PHO', 35], ['CW', 36], ['DIG', 35]],
  ['6M', '10M', '12M', '15M', '17M', '20M', '30M', '40M', '60M', '80M', '160M'].map((b, i) => ({ cls: i % 2 ? '' : 'alt', cells: [b] })));

// Logbook
const log = `21:12|YL2NX|YL||15|29|KO27|-05|-01||Raitis|Riga
21:14|PA3GLH|PA||14|27|JO22|-12|+03
21:21|PA1AT|PA||14|27|JO32|-04|-04||Gerard|Ad Assen
21:25|VE9DX|VE|NB|05|09|FN75|-19|+02||Andy|Rothesay
21:34|DK8AP|DL||14|28|JO51|-12|-13
21:43|EA1AST|EA|O|14|37|IN73|+07|+08||Gerardo Gonzale|Aviles
21:54|DL7MDX|DL||14|28|JO60|-06|+01
21:59|PA3FYG|PA||14|27|JO22|+08|+11||Hans
22:03|SQ5JQI|SP||15|28|KO02|-12|-01
22:07|OZ1AXG|OZ||14|18|JO65|-13|-05|EU-029|Flemming Nymann
22:18|EB1IFK|EA||14|37|IN52|-03|+05
22:33|GM0HUU|GM||14|27|IO75|+03|+10
22:35|EA4AAI|EA||14|37|IN80|+06|+08
22:41|OZ1FHU|OZ||14|18|JO55|-05|+02`.split('\n').map(l => l.split('|'));
const logRows = log.map((r, i) => ({
  cls: i % 2 ? '' : 'alt',
  cells: ['08/12/17', r[0], r[1], r[2], r[3], r[4], r[5], r[6], r[7], r[8], r[9], '', '', '', '', '', '', '', '', r[10], r[11],
    r[1] === 'EA1AST' ? '5358,349' : '5357,810', '60M', 'FT8', 'FT8  Sent: ' + r[7] + '  Rcvd:']
}));
logRows.push({ cls: 'alt', cells: [] });
grid('log', [['Fecha', 67, 'c'], ['Hora', 42, 'c'], ['QSO con', 90], ['DXCC', 46, 'c'], ['WAS', 33, 'c'], ['CQ', 28, 'c'], ['ITU', 28, 'c'], ['Grid', 49, 'c'], ['RST E', 43, 'c'], ['RST R', 48, 'c'], ['IOTA', 50], ['SOTA', 58], ['DVGE', 70], ['DME', 47], ['QE', 21], ['QR', 21], ['LE', 22], ['LR', 21], ['Manager', 59], ['Nombre', 107], ['QTH', 224], ['Frecuencia', 77, 'r'], ['Banda', 41, 'c'], ['Modo', 48, 'c'], ['Comentario', 157]], logRows);

// Spectrum scopes
function scope(id, w, step, labels, trace) {
  let o = '';
  for (let x = 0, i = 0; x < w; x += step / 5, i++) o += `<path d="M${x.toFixed(1)} 0v3" stroke="#fff"/>`;
  labels.forEach((t, i) => {
    const x = step * (i + 1);
    o += i ? `<path d="M${x} 18V76" stroke="#999" stroke-dasharray="3 3"/>` : `<path d="M${x} 14V76" stroke="#0ff" stroke-width="1.500"/><path d="M${x} 13l3.500 3.500-3.500 3.500-3.500-3.500z" fill="#0ff"/>`;
    if (t) o += `<text x="${x}" y="12.500" fill="#fff" text-anchor="middle">${t}</text>`;
  });
  o += `<path d="${trace}" fill="none" stroke="#0f0"/>`;
  $(id).setAttribute('viewBox', `0 0 ${w} 77`);
  $(id).innerHTML = o;
}
scope('scope1', 723, 120.700, ['500', '1000', '1500', '2000', ''], 'M1 60V76V62L3 76H137L183 74 188 70 192 66 195 58 197 57 199 60 203 41 205 58 208 71 216 73 225 75 240 76H390L406 74 408 76H723');
scope('scope2', 729, 121.600, ['500', '1000', '1500', '2000', '2500'], 'M1 55V76V62L3 76H176L193 74 197 64 200 69 205 45 207 66 211 72 218 75 229 76H409L410 75 412 76H729');

// Macro keys
const keys = [
  ['CQ', 'lil'], ['RST', 'lil'], ['TU', 'lil'], ['MYCALL', 'lil'], ['CALL', 'lil'], ['TNX', 'lil'], ['?', 'lil'], ['AGN', 'lil'], ['5W', '#c0ffc0'], ['10W', '#ffffc4'], ['75W', '#ffcb98'], ['110W', '#f00', '#600'],
  ['CQ X2', 'lil'], ['2RST', 'lil'], ['TU MY', 'lil'], ['2 MY', 'lil'], ['Gx RST', 'lil'], ['NAME', 'lil'], ['CQ QSX', 'lil'], ['INFO', 'lil'], ['CW', 'lav'], ['DATA', 'lav'], ['SSB LO', 'lav'], ['SSB HI', 'lav'],
  ['RTTY', 'pur'], ['PSKXX', 'pur'], ['', 'pur'], ['80m', '#606060', '#fff'], ['60M', '#707070', '#fff'], ['40M', '#808080', '#fff'], ['30M', '#909090', '#fff'], ['20M', '#a0a0a0'], ['17M', '#b0b0b0'], ['15M', '#c0c0c0'], ['12M', '#d0d0d0'], ['10M', '#e0e0e0']
];
$('keys1').innerHTML = keys.map(([t, c, f]) => c[0] === '#' ? `<span style="background:${c};color:${f || '#000'}">${t}</span>` : `<span class="${c}">${t}</span>`).join('');
$('keys2').innerHTML = '<span></span>'.repeat(36);

// Status panel widths
[147, 78, 45, 45, 55, 61, 61, 57, 46, 39, 38, 38, 40].forEach((w, i) => { document.querySelectorAll('.s2 span')[i].style.width = w + 'px'; });
```
